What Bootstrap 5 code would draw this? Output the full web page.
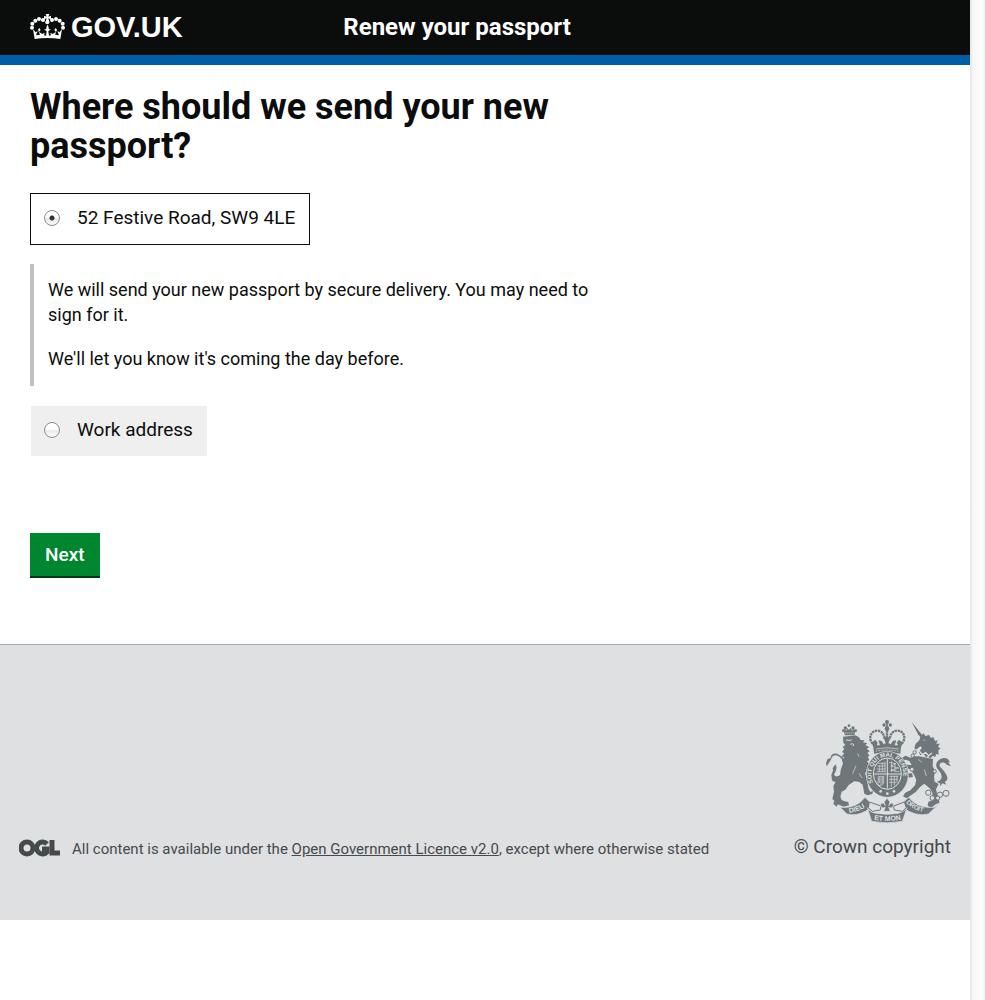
<!DOCTYPE html>
<html lang="en">
<head>
<meta charset="utf-8">
<meta name="viewport" content="width=device-width, initial-scale=1">
<title>Renew your passport - GOV.UK</title>
<link href="https://cdn.jsdelivr.net/npm/bootstrap@5.3.0/dist/css/bootstrap.min.css" rel="stylesheet">
<style>
  body { font-family: Roboto, "Liberation Sans", sans-serif; font-size: 19px; line-height: 25px; color: #0b0c0c; background: #fff; }
  .site-header { background: #0b0c0c; min-height: 55px; padding-left: 30px; }
  .blue-bar { background: #005ea5; height: 10px; }
  .brand-col { flex: 0 0 auto; width: 33.333%; }
  .brand { font-family: "Liberation Sans", Arial, sans-serif; font-size: 29px; font-weight: 700; line-height: 55px; gap: 6px; }
  .service-name { font-size: 24px; font-weight: 700; line-height: 55px; }
  .page-main { padding: 23px 30px 68px; }
  .question { max-width: 620px; }
  .question h1 { font-size: 36px; font-weight: 700; line-height: 39px; margin: 0 0 27px; max-width: 540px; }
  .choice { display: flex; width: fit-content; align-items: center; gap: 17px; border: 1px solid #fff; padding: 11px 14px 14px 13px; background: #efefef; background-clip: padding-box; cursor: pointer; }
  .choice:has(input:checked) { border-color: #0b0c0c; background: #fff; }
  .choice input { appearance: none; flex: none; width: 16px; height: 16px; margin: 0; border: 1px solid #8c8c8c; border-radius: 50%; background: linear-gradient(#fff 45%, #ececec 55%, #fafafa); }
  .choice input:checked { background: radial-gradient(circle, #333 2px, transparent 3px), linear-gradient(#fff 45%, #e8e8e8 55%, #fafafa); }
  .inset-note { border-left: 4px solid #bfc1c3; margin: 19px 0; padding: 13px 0 15px 14px; font-size: 18px; }
  .inset-note p { margin: 0 0 19px; max-width: 560px; }
  .inset-note p:last-child { margin: 0; }
  .btn-next { --bs-btn-color: #fff; --bs-btn-hover-color: #fff; --bs-btn-border-width: 0; --bs-btn-padding-x: 15px; --bs-btn-padding-y: 9px; --bs-btn-font-size: 19px; --bs-btn-line-height: 25px; --bs-btn-font-weight: 500; --bs-btn-bg: #00862f; --bs-btn-hover-bg: #006e32; box-shadow: 0 2px 0 #003618; margin-top: 76px; }
  .site-footer { background: #dee0e2; border-top: 1px solid #a1acb2; padding: 73px 19px 61px; color: #454a4c; }
  .licence { font-size: 15px; line-height: 20px; }
  .licence svg { margin-bottom: 2px; }
  .licence a, .crown a { color: inherit; }
  .crest { margin-bottom: 10px; }
  .scroll-track { flex: 0 0 15px; background: linear-gradient(90deg, #e4e4e4, #f7f7f7 3px, #fcfcfc 12px, #f1f1f1); }
</style>
</head>
<body>
<div class="d-flex min-vh-100">
  <div class="flex-grow-1">
    <header>
      <div class="site-header d-flex">
        <div class="brand-col">
          <a href="#" class="brand d-flex align-items-center text-white text-decoration-none">
            <svg width="35" height="28" viewBox="0 0 105 84" aria-hidden="true">
              <g fill="#fff">
                <path d="M47 0h11l-3 8 8-3v11l-8-3 3 10h-11l3-10-8 3V5l8 3z"/>
                <circle cx="52" cy="25" r="6"/><circle cx="39" cy="18" r="6"/><circle cx="66" cy="18" r="6"/>
                <circle cx="27" cy="15" r="6"/><circle cx="16" cy="20" r="6"/><circle cx="7" cy="29" r="6"/><circle cx="6" cy="41" r="6"/>
                <circle cx="78" cy="15" r="6"/><circle cx="89" cy="20" r="6"/><circle cx="98" cy="29" r="6"/><circle cx="99" cy="41" r="6"/>
                <path d="M9 46 14 75Q52 69 91 75L96 46 88 55 82 51 87 64 75 62 81 47 77 42 73 48 78 54 68 60 61 56 63 64 57 65 55 52 63 46 57 46 54 34H51L48 46H42L50 52 48 65 42 64 44 56 37 60 27 54 32 48 28 42 24 47 30 62 18 64 23 51 17 55Z"/>
              </g>
            </svg>
            <span>GOV.UK</span>
          </a>
        </div>
        <div class="service-name text-white">Renew your passport</div>
      </div>
      <div class="blue-bar"></div>
    </header>

    <main class="page-main">
      <form class="question">
        <h1>Where should we send your new passport?</h1>
        <label class="choice" for="home"><input type="radio" name="address" id="home" checked><span>52 Festive Road, SW9 4LE</span></label>
        <div class="inset-note">
          <p>We will send your new passport by secure delivery. You may need to sign for it.</p>
          <p>We'll let you know it's coming the day before.</p>
        </div>
        <label class="choice" for="work"><input type="radio" name="address" id="work"><span>Work address</span></label>
        <button type="button" class="btn btn-next rounded-0">Next</button>
      </form>
    </main>

    <footer class="site-footer d-flex justify-content-between align-items-end">
      <div class="licence d-flex align-items-center">
        <svg class="flex-shrink-0 me-2" width="45" height="18" viewBox="0 0 45 18" aria-label="OGL" role="img">
          <g fill="none" stroke="#454a4c" stroke-width="5">
            <ellipse cx="8" cy="9" rx="6" ry="6"/>
            <path d="M28 5A6 6 0 1 0 28 13V10H23"/>
            <path d="M33 1V14H41"/>
          </g>
        </svg>
        <span>All content is available under the <a href="#">Open Government Licence v2.0</a>, except where otherwise stated</span>
      </div>
      <div class="crown text-end">
        <svg class="crest d-block ms-auto" width="127" height="106" viewBox="27 24 381 318" aria-hidden="true">
          <g fill="#6f777b">
            <!-- lion -->
            <path d="M89 57 94 62 97 54 102 60 107 54 111 62 117 57 121 63 118 75 90 76 86 64Z"/>
            <circle cx="102" cy="47" r="4"/><circle cx="91" cy="54" r="5"/><circle cx="114" cy="54" r="5"/><circle cx="85" cy="62" r="4"/><circle cx="122" cy="62" r="4"/>
            <path d="M84 80 121 76 132 82 137 90 149 91 144 97 157 100 151 105 163 112 155 116 164 124 157 128 164 137 158 140 163 150 156 154 163 162 170 172 172 180 160 177 154 185 150 190 157 212 160 235 166 246 174 243 172 252 158 256 148 251 143 224 132 215 118 214 101 225 91 239 80 245 76 260 80 270 89 274 100 276 102 286 86 290 68 283 66 290 55 282 58 272 52 267 57 245 55 228 62 216 53 214 49 203 58 198 65 206 74 205 77 180 84 160 81 150 89 143 80 139 88 130 81 126 88 117 83 111 91 104 85 98Z"/>
            <path d="M77 190C94 174 85 138 62 136 50 136 51 146 44 155L35 169 33 160 38 147 47 144C48 130 60 129 68 132 98 145 99 177 80 195ZM77 203Q59 214 53 205C42 195 58 184 53 175L61 163 65 171Q64 184 58 191C56 200 67 202 75 195Z"/>
            <!-- unicorn -->
            <path d="M290 35 323 77 317 82 309 73Z"/>
            <path d="M317 78 326 70 331 78 342 75 348 84 355 81 360 93 368 91 364 101 374 101 369 111 377 115 370 121 371 134 364 132 360 142 354 137 345 146 340 138 333 142 326 132 316 136 311 126 321 113 316 109 303 119 298 115 302 101 313 91Z"/>
            <path d="M312 139 354 147 353 169 361 184 357 199 359 215 371 222 363 238 369 262 374 278 362 283 348 294 338 287 340 275 353 271 352 247 344 235 328 221 316 230 302 246 288 256 275 265 264 259 271 248 286 241 300 226 304 210 298 196 286 177 276 176 279 190 291 190 294 200 284 203 270 193 266 175 276 164 290 165 283 153 272 149 263 151 262 143 271 137 287 143 297 139Z"/>
            <path d="M365 215C392 208 376 184 367 176 356 160 373 144 389 144 399 145 402 151 405 158L399 157 408 169 395 164C389 154 371 155 374 169 394 190 406 207 389 216L394 224 382 220 376 229 375 220Z"/>
            <!-- crown -->
            <circle cx="216" cy="36" r="6"/><circle cx="207" cy="45" r="5"/><circle cx="226" cy="45" r="5"/><circle cx="216" cy="56" r="7"/>
            <path d="M170 98 181 89 188 98 185 106 195 106 190 91 200 93 206 103 212 99 207 86 216 77 225 87 220 99 227 103 234 92 244 91 239 106 249 106 245 98 252 89 263 98 258 112 256 131Q217 124 177 131L175 112Z"/>
          </g>
          <g fill="none" stroke="#6f777b">
            <path d="M173 101C157 83 170 61 187 62Q206 63 209 88M260 101C277 83 264 61 247 62Q227 63 224 88M216 61V95" stroke-width="7" stroke-dasharray="7 2"/>
            <path d="M216 33V59" stroke-width="5"/>
          </g>
          <g fill="none" stroke="#dee0e2">
            <path d="M183 117Q216 109 251 117" stroke-width="2"/><path d="M182 124Q216 116 251 124" stroke-width="2" stroke-dasharray="5 3"/>
            <path d="M90 69H117" stroke-width="2" stroke-dasharray="4 2"/>
            <path d="M93 91q6-3 10 1l7-3M106 103l6-2 5 4-4 3" stroke-width="3"/>
            <path d="M123 167l-10 24M132 190l9 14M128 130l4 10" stroke-width="2"/>
            <path d="M312 122l10 12 10-6 9 9 10-8" stroke-width="4"/>
            <path d="M325 90l6 1M310 148l10 9M328 178l6 20" stroke-width="2"/>
          </g>
          <!-- garter and shield -->
          <ellipse cx="217" cy="193" rx="63" ry="69" fill="#6f777b" stroke="#dee0e2" stroke-width="2"/>
          <ellipse cx="217" cy="191" rx="42" ry="47" fill="#6f777b" stroke="#dee0e2" stroke-width="3"/>
          <g fill="none" stroke="#dee0e2" stroke-width="2">
            <path d="M217 146V236M176 192H258" stroke-width="3"/>
            <path d="M187 168h25M185 177h27M189 160h23M185 185h27M193 166v20M202 157v29M210 155v31"/>
            <path d="M223 199h27M222 208h27M222 217h22M229 197v34M238 197v29M246 197v20"/>
            <path d="M222 157l20 4-15 7 24 6-24 7 25 4M230 154v32M240 159v26"/>
            <path d="M190 199q9 2 16 0v20q-11 15-17 3zM193 202v17M198 202v23M203 201v20"/>
          </g>
          <path id="garterArc" d="M174 218A48 54 0 1 1 260 218" fill="none"/>
          <text fill="#dee0e2" font-family="Liberation Sans, sans-serif" font-weight="700" font-size="18"><textPath href="#garterArc">SOIT QUI MAL PENSE</textPath></text>
          <g fill="#dee0e2"><circle cx="197" cy="244" r="4"/><circle cx="217" cy="251" r="4"/><circle cx="237" cy="244" r="4"/></g>
          <!-- rose chain -->
          <g fill="#dee0e2" stroke="#6f777b" stroke-width="3">
            <circle cx="293" cy="137" r="5"/><circle cx="299" cy="127" r="5"/><circle cx="291" cy="178" r="6"/><circle cx="359" cy="184" r="5"/>
            <circle cx="340" cy="248" r="8"/><circle cx="352" cy="264" r="7"/><circle cx="375" cy="254" r="8"/><circle cx="393" cy="250" r="9"/><circle cx="368" cy="264" r="6"/>
          </g>
          <!-- ribbon -->
          <path d="M75 292Q125 297 150 262L164 276 170 292Q130 322 96 312Z" fill="#6f777b" stroke="#dee0e2" stroke-width="2"/>
          <path d="M358 292Q308 297 281 262L266 276 262 292Q304 322 340 312L376 278Z" fill="#6f777b" stroke="#dee0e2" stroke-width="2"/>
          <path d="M157 293Q166 308 184 310 218 316 250 310 268 306 276 293L262 334Q217 343 170 334Z" fill="#6f777b" stroke="#dee0e2" stroke-width="2"/>
          <path d="M163 276 198 288 196 300 172 304 160 293ZM268 276 236 288 238 300 262 304 274 293Z" fill="#dee0e2" stroke="#6f777b" stroke-width="3"/>
          <path id="ribbonLeft" d="M103 308Q137 306 163 281" fill="none"/>
          <path id="ribbonMid" d="M177 329Q217 337 262 328" fill="none"/>
          <path id="ribbonRight" d="M273 278Q297 304 340 308" fill="none"/>
          <g fill="#dee0e2" font-family="Liberation Sans, sans-serif" font-weight="700">
            <text font-size="21"><textPath href="#ribbonLeft">DIEU</textPath></text>
            <text font-size="21"><textPath href="#ribbonMid">ET MON</textPath></text>
            <text font-size="19"><textPath href="#ribbonRight">DROIT</textPath></text>
          </g>
          <!-- fleur -->
          <path d="M216 265 225 276 221 287Q226 276 234 280 240 289 228 294L221 292 226 304H206L211 292 204 294Q192 289 199 280 207 276 211 287L207 276Z" fill="#6f777b" stroke="#dee0e2" stroke-width="2"/>
        </svg>
        <a class="text-decoration-none" href="#">© Crown copyright</a>
      </div>
    </footer>
  </div>
  <div class="scroll-track" aria-hidden="true"></div>
</div>
<script src="https://cdn.jsdelivr.net/npm/bootstrap@5.3.0/dist/js/bootstrap.bundle.min.js"></script>
</body>
</html>
